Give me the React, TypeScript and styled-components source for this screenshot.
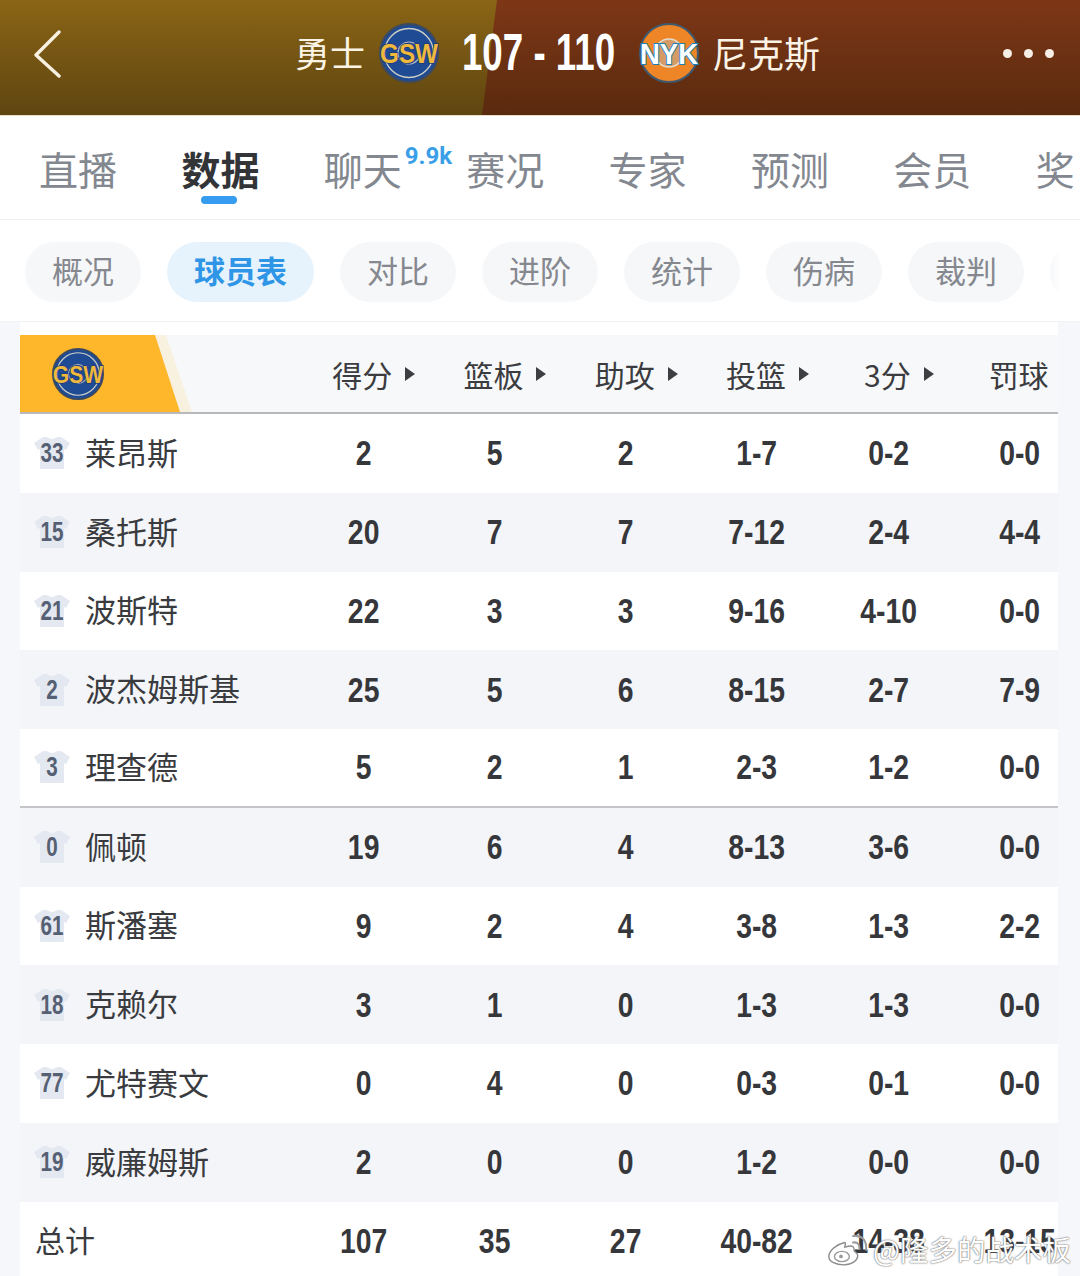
import React from "react";
import styled, { createGlobalStyle } from "styled-components";

const CJK = `"Noto Sans CJK SC", "Noto Sans", sans-serif`;
const NUM = `"Liberation Sans", "Noto Sans CJK SC", sans-serif`;

const Global = createGlobalStyle`
  html, body { margin: 0; padding: 0; background: #f5f7fa; }
  body { font-family: ${CJK}; }
  #root { width: 1080px; height: 1276px; overflow: hidden; }
`;

const Page = styled.div`
  position: relative;
  width: 1080px;
  height: 1276px;
  overflow: hidden;
  background: #f5f7fa;
`;

const Header = styled.header`
  position: relative;
  height: 116px;
  padding-bottom: 10px;
  background: linear-gradient(180deg, #8a6516 0%, #5f4510 100%);
  display: flex;
  align-items: center;
  justify-content: center;
  color: #fff;
  border-bottom: 1px solid #e8dccb;
  box-sizing: border-box;
`;

const HeaderRight = styled.div`
  position: absolute;
  inset: 0;
  background: linear-gradient(180deg, #7d3716 0%, #5a2a0f 100%);
  clip-path: polygon(497px 0, 100% 0, 100% 100%, 482px 100%);
`;

const BackButton = styled.svg`
  position: absolute;
  left: 33px;
  top: 30px;
  width: 28px;
  height: 48px;
`;

const MoreDots = styled.div`
  position: absolute;
  left: 1003px;
  top: 49px;
  display: flex;
  gap: 12px;
`;

const Dot = styled.span`
  width: 9px;
  height: 9px;
  border-radius: 50%;
  background: #f6efe6;
`;

const ScoreLine = styled.div`
  position: relative;
  display: flex;
  align-items: center;
  margin-left: 35px;
`;

const TeamName = styled.span`
  font-size: 35px;
  line-height: 1;
  margin-top: -2px;
  color: #fbf4e6;
`;

const TeamNameRight = styled(TeamName)`
  font-size: 36px;
  margin-left: 13px;
`;

const Score = styled.span`
  display: flex;
  justify-content: center;
  width: 153px;
  margin: 0 24px 0 23px;
  font-family: ${NUM};
  font-weight: 700;
  font-size: 51px;
  line-height: 1;
  white-space: pre;
  transform: scaleX(0.72);
`;

const LogoLeft = styled.svg`
  margin-left: 14px;
  display: block;
`;

const LogoRight = styled.svg`
  display: block;
`;

const Tabs = styled.nav`
  position: relative;
  height: 104px;
  box-sizing: border-box;
  background: #fff;
  border-bottom: 1px solid #eef0f3;
  display: flex;
  gap: 66px;
  padding: 25px 0 0 39px;
  overflow: hidden;
  white-space: nowrap;
`;

const Tab = styled.div<{ $active?: boolean }>`
  position: relative;
  flex: none;
  width: 76.4px;
  font-size: 39px;
  line-height: 54px;
  font-weight: ${(p) => (p.$active ? 700 : 400)};
  color: ${(p) => (p.$active ? "#333438" : "#83878f")};
`;

const TabBar = styled.span`
  position: absolute;
  left: 20px;
  top: 55px;
  width: 36px;
  height: 8px;
  border-radius: 4px;
  background: #369cf0;
`;

const TabBadge = styled.sup`
  position: absolute;
  left: 81px;
  top: 0;
  font-family: "Roboto", sans-serif;
  font-size: 24px;
  line-height: 30px;
  font-weight: 700;
  color: #3a9fe8;
  vertical-align: baseline;
`;

const Pills = styled.div`
  height: 102px;
  box-sizing: border-box;
  background: #fff;
  border-bottom: 1px solid #f2f3f5;
  display: flex;
  gap: 26px;
  padding: 22px 0 0 25px;
  overflow: hidden;
`;

const Pill = styled.div<{ $active?: boolean }>`
  flex: none;
  height: 60px;
  padding: 0 27px;
  border-radius: 30px;
  background: ${(p) => (p.$active ? "#e6f3fd" : "#f6f7f9")};
  color: ${(p) => (p.$active ? "#2f95e6" : "#85888f")};
  font-weight: ${(p) => (p.$active ? 700 : 400)};
  font-size: 31px;
  line-height: 55px;
  white-space: nowrap;
`;

const PillFade = styled.div`
  flex: none;
  width: 40px;
  height: 60px;
  border-radius: 30px 0 0 30px;
  background: linear-gradient(90deg, #f6f7f9 0, #fff 10px);
`;

const Card = styled.section`
  width: 1038px;
  margin-left: 20px;
  padding-top: 13px;
  background: #fff;
  overflow: hidden;
`;

const GRID = "277.5px repeat(6, 131.3px)";

const TableHead = styled.div`
  display: grid;
  grid-template-columns: ${GRID};
  height: 79px;
  box-sizing: border-box;
  align-items: center;
  background: #f7f8fa;
  border-bottom: 2px solid #b7b9bc;
`;

const TeamCell = styled.div`
  position: relative;
  height: 77px;
  display: flex;
  align-items: center;
  padding-left: 32px;
`;

const TeamFlagShade = styled.div`
  position: absolute;
  inset: 0;
  width: 172px;
  background: #f8f1df;
  clip-path: polygon(0 0, 146px 0, 172px 100%, 0 100%);
`;

const TeamFlag = styled.div`
  position: absolute;
  inset: 0;
  width: 160px;
  background: #feb62a;
  clip-path: polygon(0 0, 135px 0, 160px 100%, 0 100%);
`;

const HeadLogo = styled.svg`
  position: relative;
  display: block;
`;

const HeadCell = styled.div`
  position: relative;
  box-sizing: border-box;
  padding-right: 2px;
  text-align: center;
  font-size: 30px;
  line-height: 38px;
  color: #3b3c40;
  white-space: nowrap;
`;

const SortArrow = styled.span<{ $short?: boolean }>`
  position: absolute;
  left: ${(p) => (p.$short ? 101 : 107.5)}px;
  top: 12px;
  width: 0;
  height: 0;
  border-left: 10px solid #3d3e42;
  border-top: 7.5px solid transparent;
  border-bottom: 7.5px solid transparent;
`;

const Row = styled.div<{ $shade?: boolean; $rule?: boolean }>`
  display: grid;
  grid-template-columns: ${GRID};
  height: 78.75px;
  box-sizing: border-box;
  align-items: center;
  background: ${(p) => (p.$shade ? "#f3f5f9" : "#fff")};
  border-bottom: ${(p) => (p.$rule ? "2px solid #c3c5c8" : "none")};
`;

const PlayerCell = styled.div`
  display: flex;
  align-items: center;
  padding-left: 14px;
  font-size: 31px;
  line-height: 40px;
  color: #3a3b3f;
  white-space: nowrap;
`;

const PlayerName = styled.span`
  margin-top: -3px;
`;

const TotalLabel = styled(PlayerCell)`
  padding-left: 15px;
  font-size: 30px;
  margin-top: -3px;
`;

const Jersey = styled.svg`
  flex: none;
  display: block;
  margin-right: 15px;
`;

const JerseyNum = styled.text`
  font-family: ${NUM};
  font-weight: 700;
  font-size: 27px;
  fill: #566074;
  text-anchor: middle;
`;

const Stat = styled.div`
  text-align: center;
  font-family: ${NUM};
  font-weight: 700;
  font-size: 35px;
  line-height: 40px;
  color: #36373b;
  transform: scaleX(0.81);
`;

const Watermark = styled.div`
  position: absolute;
  left: 827px;
  top: 1229px;
  display: flex;
  align-items: center;
  gap: 5px;
  font-size: 28.5px;
  line-height: 40px;
  color: #fff;
  white-space: nowrap;
  text-shadow: 0 0 2px #6f6f6f, 0 0 1px #6f6f6f;
`;

const WeiboMark = styled.svg`
  display: block;
`;

const Gsw = () => (
  <g>
    <circle cx="30" cy="30" r="29" fill="#1f4a94" stroke="#3f4a5c" strokeWidth="2" />
    <circle cx="30" cy="30" r="24.5" fill="none" stroke="#cfd0c4" strokeWidth="1.3" />
    <circle cx="30" cy="30" r="11" fill="none" stroke="#aeb7c6" strokeWidth="1.2" />
    <text
      x="30"
      y="40"
      textAnchor="middle"
      fontFamily="'Liberation Sans', sans-serif"
      fontWeight={700}
      fontSize={28}
      fill="#efb93e"
      stroke="#1f3a76"
      strokeWidth="1.6"
      paintOrder="stroke"
      textLength="58"
      lengthAdjust="spacingAndGlyphs"
    >
      GSW
    </text>
  </g>
);

const Nyk = () => (
  <g>
    <circle cx="30" cy="30" r="29" fill="#ee8527" stroke="#3f5a70" strokeWidth="2" />
    <circle cx="30" cy="30" r="14" fill="#d59a66" stroke="#e4dbd0" strokeWidth="1.5" />
    <text
      x="30"
      y="41"
      textAnchor="middle"
      fontFamily="'Liberation Sans', sans-serif"
      fontWeight={700}
      fontSize={30}
      fill="#ffffff"
      stroke="#1d7fb5"
      strokeWidth="2"
      paintOrder="stroke"
      textLength="58"
      lengthAdjust="spacingAndGlyphs"
    >
      NYK
    </text>
  </g>
);

const JerseyIcon = ({ num }: { num: string }) => (
  <Jersey width="36" height="34" viewBox="0 0 36 34">
    <path
      d="M9 1 L13 1 Q18 5 23 1 L27 1 L36 7 L32 14 L30 13 L30 32 Q30 33 29 33 L7 33 Q6 33 6 32 L6 13 L4 14 L0 7 Z"
      fill="#e4e8f1"
    />
    <JerseyNum x="18" y="26" textLength={num.length * 11.5} lengthAdjust="spacingAndGlyphs">
      {num}
    </JerseyNum>
  </Jersey>
);

const tabs = ["直播", "数据", "聊天", "赛况", "专家", "预测", "会员", "奖"];
const pills = ["概况", "球员表", "对比", "进阶", "统计", "伤病", "裁判"];
const cols = ["得分", "篮板", "助攻", "投篮", "3分", "罚球"];

const rows: [string, string, string[]][] = [
  ["33", "莱昂斯", ["2", "5", "2", "1-7", "0-2", "0-0"]],
  ["15", "桑托斯", ["20", "7", "7", "7-12", "2-4", "4-4"]],
  ["21", "波斯特", ["22", "3", "3", "9-16", "4-10", "0-0"]],
  ["2", "波杰姆斯基", ["25", "5", "6", "8-15", "2-7", "7-9"]],
  ["3", "理查德", ["5", "2", "1", "2-3", "1-2", "0-0"]],
  ["0", "佩顿", ["19", "6", "4", "8-13", "3-6", "0-0"]],
  ["61", "斯潘塞", ["9", "2", "4", "3-8", "1-3", "2-2"]],
  ["18", "克赖尔", ["3", "1", "0", "1-3", "1-3", "0-0"]],
  ["77", "尤特赛文", ["0", "4", "0", "0-3", "0-1", "0-0"]],
  ["19", "威廉姆斯", ["2", "0", "0", "1-2", "0-0", "0-0"]],
];

const totals = ["107", "35", "27", "40-82", "14-38", "13-15"];

export default function App() {
  return (
    <Page>
      <Global />
      <Header>
        <HeaderRight />
        <BackButton viewBox="0 0 28 48" fill="none">
          <path d="M26 2 L3 25 L26 46" stroke="#f8f1e2" strokeWidth="3.4" strokeLinecap="round" strokeLinejoin="round" />
        </BackButton>
        <ScoreLine>
          <TeamName>勇士</TeamName>
          <LogoLeft width="60" height="60" viewBox="0 0 60 60"><Gsw /></LogoLeft>
          <Score>107 - 110</Score>
          <LogoRight width="60" height="60" viewBox="0 0 60 60"><Nyk /></LogoRight>
          <TeamNameRight>尼克斯</TeamNameRight>
        </ScoreLine>
        <MoreDots><Dot /><Dot /><Dot /></MoreDots>
      </Header>
      <Tabs>
        {tabs.map((t, i) => (
          <Tab key={t} $active={i === 1}>
            {t}
            {i === 1 && <TabBar />}
            {i === 2 && <TabBadge>9.9k</TabBadge>}
          </Tab>
        ))}
      </Tabs>
      <Pills>
        {pills.map((p, i) => (
          <Pill key={p} $active={i === 1}>{p}</Pill>
        ))}
        <PillFade />
      </Pills>
      <Card>
        <TableHead>
          <TeamCell>
            <TeamFlagShade />
            <TeamFlag />
            <HeadLogo width="52" height="52" viewBox="0 0 60 60"><Gsw /></HeadLogo>
          </TeamCell>
          {cols.map((c, i) => (
            <HeadCell key={c}>
              {c}
              {i < 5 && <SortArrow $short={i === 4} />}
            </HeadCell>
          ))}
        </TableHead>
        {rows.map(([num, name, stats], i) => (
          <Row key={name} $shade={i % 2 === 1} $rule={i === 4}>
            <PlayerCell>
              <JerseyIcon num={num} />
              <PlayerName>{name}</PlayerName>
            </PlayerCell>
            {stats.map((s, j) => <Stat key={j}>{s}</Stat>)}
          </Row>
        ))}
        <Row>
          <TotalLabel>总计</TotalLabel>
          {totals.map((s, j) => <Stat key={j}>{s}</Stat>)}
        </Row>
      </Card>
      <Watermark>
        <WeiboMark width="41" height="34" viewBox="0 0 44 36" fill="none">
          <path
            d="M19 11 C10 13 2 20 2 26 C2 32 10 35 18 35 C27 35 33 30 33 25 C33 22 30 21 29 20 C30 16 27 14 23 15 L19 16 C20 13 20 11 19 11 Z"
            fill="#fff"
            stroke="#8b8b8b"
            strokeWidth="1.5"
          />
          <ellipse cx="16" cy="26" rx="8" ry="5.5" fill="#fff" stroke="#9a9a9a" strokeWidth="1.5" />
          <circle cx="15" cy="26" r="2" fill="#9a9a9a" />
          <path d="M28 11 Q35 10 35 18 M28 4 Q43 3 42 19" stroke="#9a9a9a" strokeWidth="2.2" strokeLinecap="round" />
        </WeiboMark>
        @隆多的战术板
      </Watermark>
    </Page>
  );
}
